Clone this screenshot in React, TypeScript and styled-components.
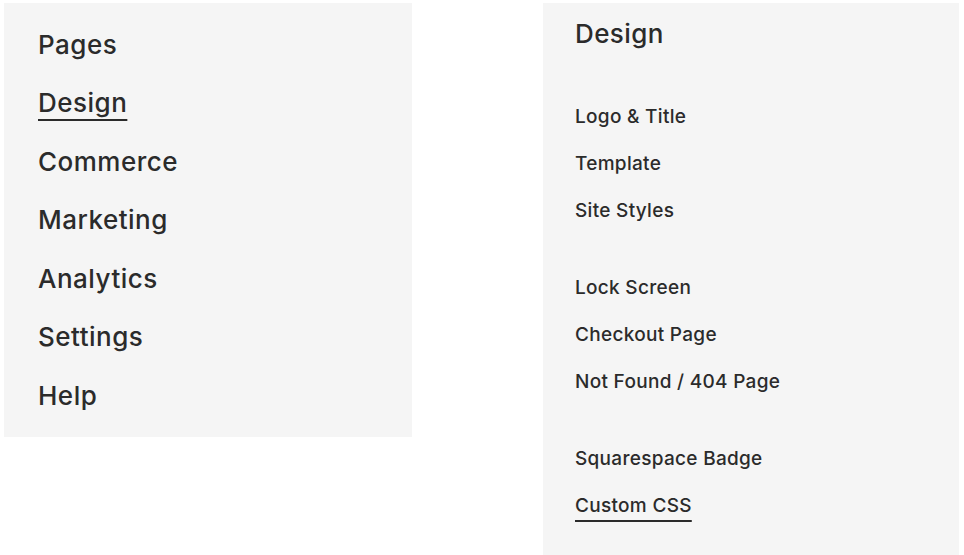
import React from "react";
import styled, { createGlobalStyle } from "styled-components";

const Global = createGlobalStyle`
  html, body { margin: 0; padding: 0; background: #ffffff; }
  body { font-family: Inter, "Noto Sans", sans-serif; color: #2b2b2b; -webkit-font-smoothing: antialiased; }
  * { box-sizing: border-box; }
`;

const Page = styled.div`
  display: flex;
  align-items: flex-start;
  padding-top: 3px;
  height: 555px;
  overflow: hidden;
`;

const MainNav = styled.nav`
  margin-left: 4px;
  width: 408px;
  height: 434px;
  background: #f5f5f5;
  padding: 12.8px 34px 0;
  display: flex;
  flex-direction: column;
`;

const MainItem = styled.div<{ $active?: boolean }>`
  font-size: 26px;
  font-weight: 500;
  line-height: 58.5px;
  letter-spacing: 0.5px;
  span {
    text-decoration: ${(p) => (p.$active ? "underline" : "none")};
    text-decoration-thickness: 2px;
    text-underline-offset: 7px;
  }
`;

const SubPanel = styled.section`
  margin-left: 131px;
  width: 416px;
  height: 552px;
  background: #f5f5f5;
  padding: 14.8px 32px 0;
  display: flex;
  flex-direction: column;
`;

const Heading = styled.h2`
  margin: 0;
  font-size: 26px;
  font-weight: 500;
  line-height: 32px;
  letter-spacing: 0.4px;
`;

const Group = styled.div<{ $first?: boolean }>`
  display: flex;
  flex-direction: column;
  margin-top: ${(p) => (p.$first ? "43.6px" : "30px")};
`;

const SubItem = styled.div<{ $active?: boolean }>`
  font-size: 19px;
  font-weight: 500;
  line-height: 47px;
  letter-spacing: 0.3px;
  span {
    text-decoration: ${(p) => (p.$active ? "underline" : "none")};
    text-decoration-thickness: 2px;
    text-underline-offset: 8px;
  }
`;

const mainItems = ["Pages", "Design", "Commerce", "Marketing", "Analytics", "Settings", "Help"];
const groups = [
  ["Logo & Title", "Template", "Site Styles"],
  ["Lock Screen", "Checkout Page", "Not Found / 404 Page"],
  ["Squarespace Badge", "Custom CSS"],
];

export default function App() {
  return (
    <>
      <Global />
      <Page>
        <MainNav>
          {mainItems.map((m) => (
            <MainItem key={m} $active={m === "Design"}>
              <span>{m}</span>
            </MainItem>
          ))}
        </MainNav>
        <SubPanel>
          <Heading>Design</Heading>
          {groups.map((g, i) => (
            <Group key={i} $first={i === 0}>
              {g.map((s) => (
                <SubItem key={s} $active={s === "Custom CSS"}>
                  <span>{s}</span>
                </SubItem>
              ))}
            </Group>
          ))}
        </SubPanel>
      </Page>
    </>
  );
}
